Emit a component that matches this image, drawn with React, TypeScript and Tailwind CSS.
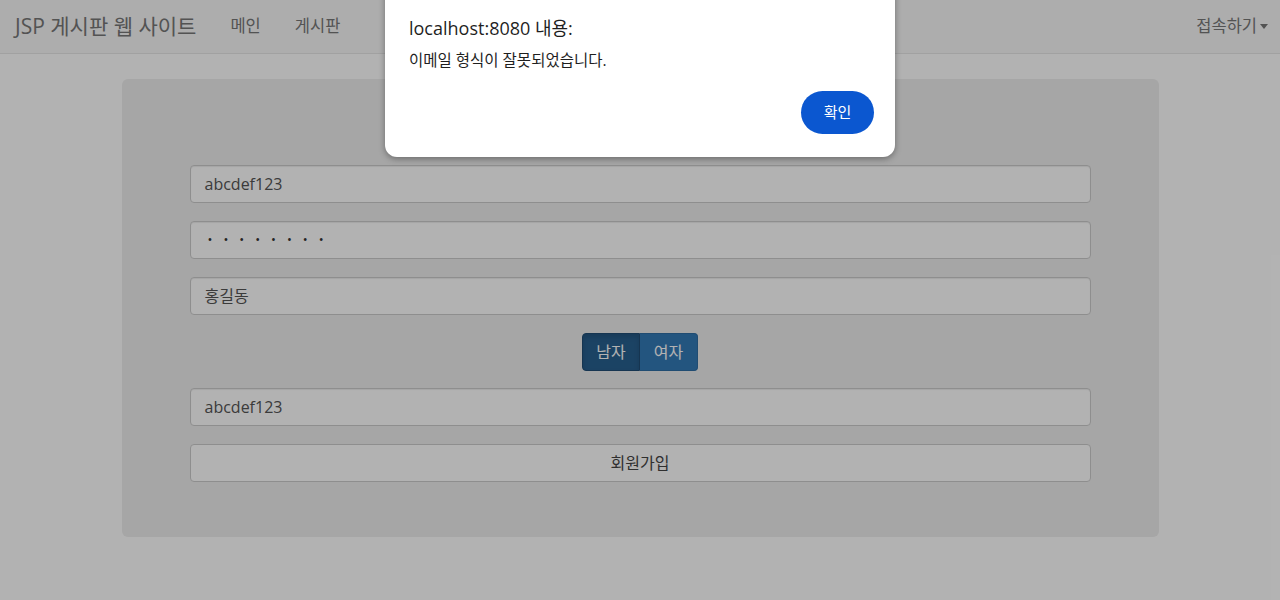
import React from "react";

const font = { fontFamily: '"Open Sans", "Noto Sans CJK KR", sans-serif' };

const Field = ({ value, password }: { value: string; password?: boolean }) => (
  <div className="h-[38px] w-full rounded-[4px] border border-[#cccccc] bg-white px-[14px] flex items-center text-[16px] text-[#555555] shadow-[inset_0_1px_1px_rgba(0,0,0,0.075)]">
    {password ? (
      <span className="text-[13px] tracking-[11px] pl-[3px] text-[#333]">••••••••</span>
    ) : (
      value
    )}
  </div>
);

const App = () => {
  return (
    <div className="relative min-h-[600px] bg-white overflow-hidden" style={font}>
      <nav className="h-[54px] bg-[#f8f8f8] border-b border-[#e7e7e7] flex items-center text-[#777777]">
        <span className="pl-[15px] pr-[17px] text-[21px]">JSP 게시판 웹 사이트</span>
        <span className="px-[17px] text-[16.5px]">메인</span>
        <span className="px-[17px] text-[16.5px]">게시판</span>
        <span className="ml-auto pr-[12px] text-[16.5px] flex items-center gap-[3px]">
          접속하기
          <span className="w-0 h-0 border-x-[4.5px] border-x-transparent border-t-[5px] border-t-[#777]" />
        </span>
      </nav>

      <div className="mx-auto mt-[25px] w-[1037px] rounded-[6px] bg-[#eeeeee] px-[68px] pt-[33px] pb-[55px]">
        <h3 className="h-[31px] mb-[22px] text-center text-[26px] leading-[31px] text-[#333]">회원가입 화면</h3>
        <div className="flex flex-col gap-[18px]">
          <Field value="abcdef123" />
          <Field value="" password />
          <Field value="홍길동" />
          <div className="flex justify-center -mb-[1px]">
            <div className="flex h-[38px] text-[16px] text-white">
              <span className="w-[58px] flex items-center justify-center rounded-l-[4px] border border-[#204d74] bg-[#286090] shadow-[inset_0_3px_5px_rgba(0,0,0,0.125)]">
                남자
              </span>
              <span className="w-[58px] flex items-center justify-center rounded-r-[4px] border border-l-0 border-[#2e6da4] bg-[#337ab7]">
                여자
              </span>
            </div>
          </div>
          <Field value="abcdef123" />
          <div className="h-[38px] w-full rounded-[4px] border border-[#cccccc] bg-white flex items-center justify-center text-[16px] text-[#444]">
            회원가입
          </div>
        </div>
      </div>

      <div className="absolute inset-0 bg-black/30" />

      <div className="absolute left-[385px] top-[-20px] w-[510px] h-[177px] rounded-[12px] bg-white shadow-[0_2px_6px_rgba(0,0,0,0.35)] px-[24px] pt-[35px]">
        <div className="text-[18px] text-[#1f1f1f] leading-[26px]">localhost:8080 내용:</div>
        <div className="mt-[8px] text-[15.5px] text-[#1f1f1f] leading-[22px]">이메일 형식이 잘못되었습니다.</div>
        <div className="flex justify-end mt-[20px] -mr-[3px]">
          <button className="w-[73px] h-[43px] rounded-full bg-[#0b57d0] text-white text-[15px]">확인</button>
        </div>
      </div>
    </div>
  );
};

export default App;
